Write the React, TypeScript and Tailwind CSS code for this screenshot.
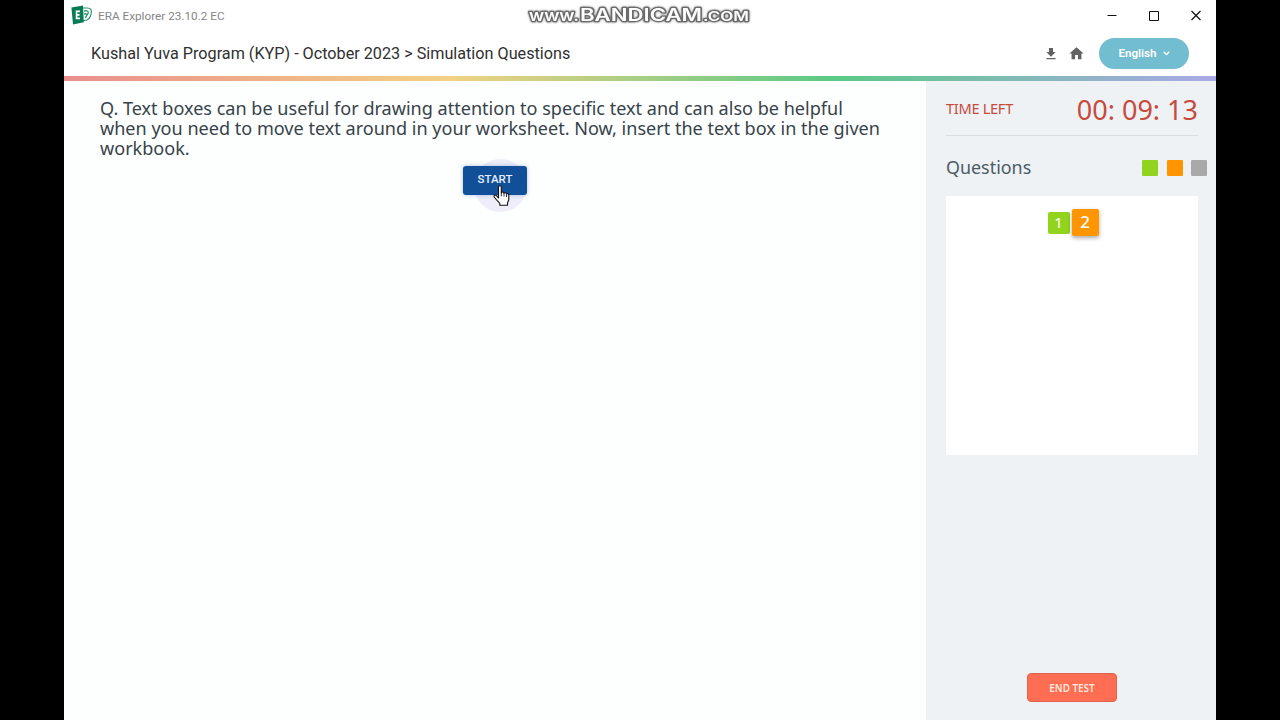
import { MdFileDownload, MdHome } from 'react-icons/md';

interface Question {
  id: number;
  status: 'answered' | 'current' | 'pending';
}

const STATUS_COLOR: Record<Question['status'], string> = {
  answered: 'bg-[#92d31d]',
  current: 'bg-[#ff9500]',
  pending: 'bg-[#a9a9a9]',
};

const QUESTIONS: Question[] = [
  { id: 1, status: 'answered' },
  { id: 2, status: 'current' },
];

const QUESTION_LINES = [
  'Q. Text boxes can be useful for drawing attention to specific text and can also be helpful',
  'when you need to move text around in your worksheet. Now, insert the text box in the given',
  'workbook.',
];

function AppLogo() {
  return (
    <svg className="h-5 w-[22px] -translate-y-px" viewBox="0 0 22 20">
      <path d="M10 3h6.5c3.1 0 4.4 2.1 3.7 5.3-.8 4.1-3.2 7-6.7 7.2H10" fill="#fff" stroke="#2b9673" strokeWidth="1.2" />
      <path d="M13 6.3c1.7-1 4.4-.6 4.3 1.2-.1 1.7-2 2.6-2.9 5.5M12.9 9.3c.9-.8 2.2-.5 3 .2" fill="none" stroke="#2b9673" strokeWidth="1.3" />
      <path d="M.4 2.4 12 .6l.8 16.6L2 19.5z" fill="#087b53" />
      <path d="M9 6.3H5.6v7H9M5.6 9.8h3" fill="none" stroke="#fff" strokeWidth="1.7" />
    </svg>
  );
}

function HandCursor() {
  return (
    <svg className="absolute left-[30px] top-[19px] h-[22px] w-[17px]" viewBox="0 0 17 22">
      <path
        d="M5.5 13V2.2c0-2 2.8-2 2.8 0v5.6c.5-1.3 2.6-1 2.7.5.6-1 2.4-.7 2.5.7.9-.8 2.3-.2 2.3 1.1v4.2c0 1.7-1.3 2.6-1.3 4v1.9H6.8v-1.7C5.5 16.9 3.2 14.8 1.3 12c-1-1.5.9-2.6 2.1-1.4z"
        fill="#fff"
        stroke="#111"
        strokeWidth="1.1"
        strokeLinejoin="round"
      />
      <path d="M8.3 8v3.3M11 8.5v3M13.5 9.2v2.7" stroke="#111" strokeWidth=".9" />
    </svg>
  );
}

function Watermark() {
  return (
    <svg className="absolute left-[462px] top-[3px] h-6 w-[226px]" viewBox="0 0 226 24">
      <g
        fill="#fff"
        stroke="#6a6a6a"
        strokeWidth="2.4"
        paintOrder="stroke"
        strokeLinejoin="round"
        fontFamily="Inter, sans-serif"
        fontWeight="600"
        style={{ filter: 'drop-shadow(0 0 1px #777)' }}
      >
        <text x="3" y="18" fontSize="15" textLength="50" lengthAdjust="spacingAndGlyphs">www.</text>
        <text x="54" y="18" fontSize="17" textLength="122" lengthAdjust="spacingAndGlyphs">BANDICAM</text>
        <text x="177" y="18" fontSize="12.5" textLength="46" lengthAdjust="spacingAndGlyphs">.COM</text>
      </g>
    </svg>
  );
}

function TitleBar() {
  return (
    <div className="relative flex h-8 items-center justify-between pl-[7px] pr-[14px]">
      <div className="flex items-center gap-[5px]">
        <AppLogo />
        <span className="pt-px text-[11.75px] text-[#868686]">ERA Explorer 23.10.2 EC</span>
      </div>
      <Watermark />
      <div className="flex items-center gap-[30px]">
        <svg className="h-3 w-3" viewBox="0 0 12 12"><path d="M1.5 5.5h9" stroke="#111" /></svg>
        <svg className="h-3 w-3" viewBox="0 0 12 12"><path d="M1.5 1.5h9v9h-9z" fill="none" stroke="#111" /></svg>
        <svg className="h-3 w-3" viewBox="0 0 12 12"><path d="m1.5 1 9 9m0-9-9 9" stroke="#111" strokeWidth="1.2" /></svg>
      </div>
    </div>
  );
}

function Header() {
  return (
    <header className="flex h-11 items-center justify-between pb-px pl-[27px] pr-[27px]">
      <h1 className="pt-px text-[16.2px] text-[#303030]">Kushal Yuva Program (KYP) - October 2023 &gt; Simulation Questions</h1>
      <div className="flex items-center text-[#626262]">
        <MdFileDownload size={16} />
        <MdHome size={17} className="ml-[9px]" />
        <button className="ml-[14px] flex h-[31px] w-[90px] items-center justify-center gap-[6px] rounded-full bg-[#72bdd0] text-[11.6px] font-semibold text-white">
          English
          <svg className="h-[5px] w-[7px]" viewBox="0 0 7 5"><path d="m.7.8 2.8 2.8L6.3.8" fill="none" stroke="currentColor" strokeWidth="1.4" /></svg>
        </button>
      </div>
    </header>
  );
}

function Sidebar() {
  return (
    <aside className="flex w-[290px] flex-col bg-[#eef2f4] pl-5 pr-[18px] font-['Noto_Sans',sans-serif]">
      <div className="flex h-[55px] items-center justify-between border-b border-[#d9dee0] pt-[2px] text-[#c84a3c]">
        <span className="text-[14.6px] tracking-[-0.3px]">TIME LEFT</span>
        <span className="whitespace-nowrap pt-[2px] text-[27px]">00: 09: 13</span>
      </div>
      <div className="-mr-[9px] mt-[16px] flex h-8 items-center justify-between">
        <h2 className="-mt-[2px] text-[17.9px] text-[#4c5b65]">Questions</h2>
        <div className="flex gap-[8.5px]">
          <span className="h-4 w-4 rounded-[1px] bg-[#92d31d]" />
          <span className="h-4 w-4 rounded-[1px] bg-[#ff9500]" />
          <span className="h-4 w-4 rounded-[1px] bg-[#a9a9a9]" />
        </div>
      </div>
      <div className="mt-[12px] flex h-[258.5px] items-start justify-center gap-[2px] bg-white pl-[2px] pt-[13px] text-white">
        {QUESTIONS.map((q) => (
          <button
            key={q.id}
            className={`${STATUS_COLOR[q.status]} flex items-center justify-center rounded-[2px] ${
              q.status === 'current' ? 'h-[27px] w-[27px] pb-px text-[17px] font-medium shadow-[0_2px_4px_rgba(0,0,0,0.35)]' : 'mt-[3px] h-[22px] w-[22px] pb-px text-[15px]'
            }`}
          >
            {q.id}
          </button>
        ))}
      </div>
      <button className="mb-[18px] mt-auto h-[29px] w-[90px] self-center rounded-[4px] border border-[#e0654d] bg-[#ff6e52] pt-px text-[9.9px] font-semibold text-[#ffe9df]">
        END TEST
      </button>
    </aside>
  );
}

export default function App() {
  return (
    <div className="h-screen overflow-hidden bg-black px-16">
      <div className="flex h-full flex-col bg-white font-[Roboto,sans-serif]">
        <TitleBar />
        <Header />
        <div className="h-[5px] shrink-0 bg-[linear-gradient(90deg,#ea8e8e_0%,#f3d184_33.3%,#5bca85_66.6%,#aaa8e8_100%)]" />
        <div className="flex min-h-0 flex-1">
          <main className="flex-1 bg-[#fdfefe] pl-9 pt-[17px]">
            <div className="whitespace-nowrap font-['Noto_Sans',sans-serif] text-[18.07px] leading-[20px] text-[#37434a]">
              {QUESTION_LINES.map((line) => (
                <p key={line}>{line}</p>
              ))}
            </div>
            <div className="relative ml-[363px] mt-[8px] h-[29px] w-[64px]">
              <div className="absolute left-[11px] top-[-7px] h-[53px] w-[53px] rounded-full bg-[#eeedf9]" />
              <button className="relative h-[29px] w-[64px] rounded-[3px] bg-[#114f98] pb-[2px] text-[11.5px] font-medium text-[#e8effa] shadow-[0_0_4px_rgba(60,110,190,0.4)]">
                START
              </button>
              <HandCursor />
            </div>
          </main>
          <Sidebar />
        </div>
      </div>
    </div>
  );
}
